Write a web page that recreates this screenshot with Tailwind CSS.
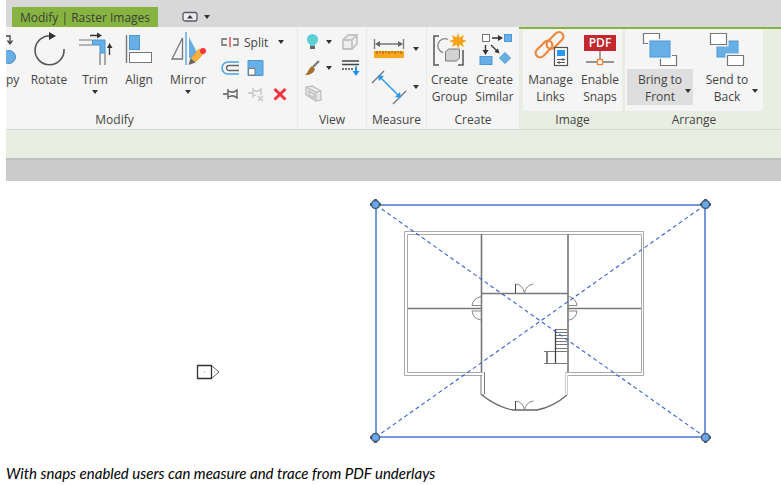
<!DOCTYPE html>
<html lang="en">
<head>
  <meta charset="UTF-8" />
  <meta name="viewport" content="width=device-width, initial-scale=1.0"/>
  <title>Modify | Raster Images</title>
  <script src="https://cdn.jsdelivr.net/npm/@tailwindcss/browser@4"></script>
</head>
<body class="bg-white overflow-hidden font-['Open_Sans',sans-serif] text-[12px] leading-[17px] text-[#444]">
  <header class="ml-1.5">
    <!-- Tabs -->
    <nav class="flex h-[27px] items-end bg-[#d8d8d8] pl-1.5">
      <button class="h-5 w-[146px] whitespace-nowrap bg-[#87b441] text-[#3c3f38]">Modify | Raster Images</button>
      <button class="ml-6 flex h-5 items-center gap-1.5" aria-label="Ribbon display">
        <svg class="h-3 w-4" viewBox="0 0 16 12"><rect x="1" y="1.500" width="14" height="8.500" rx="2" fill="#eee" stroke="#555b66" stroke-width="1.300"/><path d="M5 7.500h6L8 4z" fill="#333"/></svg>
        <svg class="h-1 w-1.5" viewBox="0 0 6 4"><path d="M0 0h6L3 4z" fill="#333"/></svg>
      </button>
    </nav>

    <!-- Ribbon -->
    <div class="flex h-[103px] border-b border-[#d9dbd3] bg-[#f5f5f5]">
      <section class="flex w-[292px] shrink-0 flex-col border-r border-[#e8ebdf]">
        <div class="flex h-[84px] pt-1">
          <button class="flex w-5 flex-col items-start" aria-label="Copy">
            <svg class="h-9 w-5 shrink-0" viewBox="0 0 20 36"><path d="M0 5h4v7M1.500 9.500L4 13l2.500-3.500" fill="none" stroke="#444" stroke-width="1.300"/><circle cx="3" cy="26" r="6.500" fill="#68afe5" stroke="#4a90c8"/></svg>
            <span class="mt-1">py</span>
          </button>
          <button class="flex w-[46px] flex-col items-center">
            <svg class="h-9 w-9 shrink-0" viewBox="0 0 36 36"><path d="M21 5A14.500 14.500 0 1 0 33 18" fill="none" stroke="#555" stroke-width="1.600"/><path d="M18 1l7 4-7 4z" fill="#333"/></svg>
            <span class="mt-1">Rotate</span>
          </button>
          <button class="flex w-[46px] flex-col items-center">
            <svg class="h-9 w-9 shrink-0" viewBox="0 0 36 36"><path d="M2 9h13M2 14h13M23 22v12M28 22v12" stroke="#777" stroke-width="1.200"/><path d="M15.500 9H28v13h-5v-8h-7.500z" fill="#68afe5" stroke="#4494d4"/><path d="M13 4.500h9M32.500 24v-8" stroke="#333" stroke-width="1.300"/><path d="M20 1.500l5 3-5 3zM30 17l2.500-5 3 5z" fill="#333"/></svg>
            <span class="mt-1">Trim</span>
            <svg class="mt-0.5 h-1 w-1.5" viewBox="0 0 6 4"><path d="M0 0h6L3 4z" fill="#333"/></svg>
          </button>
          <button class="flex w-[42px] flex-col items-center">
            <svg class="h-9 w-7 shrink-0" viewBox="0 0 28 36"><path d="M1.500 4v28" stroke="#777" stroke-width="1.400"/><rect x="4.500" y="4.500" width="10" height="14" fill="#68afe5" stroke="#4a98d6"/><rect x="4.500" y="21.500" width="22" height="10" fill="#fff" stroke="#777"/></svg>
            <span class="mt-1">Align</span>
          </button>
          <button class="flex w-[56px] flex-col items-center">
            <svg class="h-9 w-9 shrink-0" viewBox="0 0 36 36"><path d="M12.500 7v21H2z" fill="none" stroke="#777" stroke-width="1.300"/><path d="M16 1v33" stroke="#68afe5" stroke-width="1.600"/><path d="M19 6l11 21H19z" fill="#68afe5"/><path d="M21 27l8-9 5 4-8.500 9z" fill="#fbb03f" stroke="#d98e20" stroke-width=".6"/><path d="M18.500 34l2-7 5 4.500z" fill="#666"/><circle cx="33" cy="20" r="3" fill="#f4333d"/></svg>
            <span class="mt-1">Mirror</span>
            <svg class="mt-0.5 h-1 w-1.5" viewBox="0 0 6 4"><path d="M0 0h6L3 4z" fill="#333"/></svg>
          </button>
          <div class="-mt-0.5 flex flex-col">
            <button class="flex h-[26px] items-center pl-1">
              <svg class="h-4 w-5" viewBox="0 0 20 16"><path d="M7 5H2v6h5M13 5h5v6h-5" fill="none" stroke="#666" stroke-width="1.300"/><path d="M10 3v10" stroke="#e0504c" stroke-width="1.500"/></svg>
              <span class="ml-1">Split</span>
              <svg class="ml-2.5 h-1 w-1.5" viewBox="0 0 6 4"><path d="M0 0h6L3 4z" fill="#333"/></svg>
            </button>
            <div class="flex h-[26px] items-center gap-1.5 pl-1">
              <button aria-label="Offset"><svg class="h-4 w-5" viewBox="0 0 20 16"><path d="M19 2H8a6 6 0 0 0 0 12h11" fill="none" stroke="#4da3e4" stroke-width="1.600"/><path d="M19 5.500H9a2.500 2.500 0 0 0 0 5h10" fill="none" stroke="#666" stroke-width="1.300"/></svg></button>
              <button aria-label="Scale"><svg class="h-4 w-5" viewBox="0 0 20 16"><path d="M2 .5h15v15H2z" fill="#68afe5" stroke="#4a98d6"/><path d="M2.500 8.500h6.500v6.500H2.500z" fill="#fff" stroke="#777"/></svg></button>
            </div>
            <div class="flex h-[26px] items-center gap-1.5 pl-1">
              <button aria-label="Unpin"><svg class="h-4 w-5" viewBox="0 0 20 16"><path d="M3 8h5M8 3v10M8 5l3 1h3l3-2v8l-3-2h-3l-3 1" fill="none" stroke="#555" stroke-width="1.300"/></svg></button>
              <button aria-label="Pin"><svg class="h-4 w-5" viewBox="0 0 20 16"><path d="M2 7h5M7 2v10M7 4l3 1h2l3-2v6M7 10l3-1M12 10l5 5M17 10l-5 5" fill="none" stroke="#c4c4c4" stroke-width="1.300"/></svg></button>
              <button aria-label="Delete"><svg class="h-4 w-4" viewBox="0 0 16 16"><path d="M2.500 3l11 10.500M13.500 3l-11 10.500" stroke="#f3323a" stroke-width="3"/></svg></button>
            </div>
          </div>
        </div>
        <h2 class="pr-[74px] text-center">Modify</h2>
      </section>

      <section class="flex w-[69px] shrink-0 flex-col border-r border-[#e8ebdf]">
        <div class="flex h-[84px] flex-col pt-0.5 pl-1.5">
          <div class="flex h-[26px] items-center">
            <button class="flex items-center" aria-label="Hide in view">
              <svg class="h-5 w-4" viewBox="0 0 16 20"><circle cx="8.500" cy="7.500" r="5.500" fill="#5fcfd6"/><path d="M6 12h5v2H6z" fill="#5fcfd6"/><path d="M6 14h5v3H6z" fill="#666"/></svg>
              <svg class="ml-1.5 h-1 w-1.5" viewBox="0 0 6 4"><path d="M0 0h6L3 4z" fill="#333"/></svg>
            </button>
            <button class="ml-2" aria-label="Selection box"><svg class="h-5 w-5" viewBox="0 0 20 20"><path d="M3 8h9v9H3zM3 8l5-5h9l-5 5M17 3v9l-5 5" fill="#eee" stroke="#c4c4c4" stroke-width="1.800"/></svg></button>
          </div>
          <div class="flex h-[26px] items-center">
            <button class="flex items-center" aria-label="Override graphics">
              <svg class="h-5 w-4" viewBox="0 0 16 20"><path d="M9 9l6-6" stroke="#777" stroke-width="2.200"/><path d="M8 8l3 3c-1 4-5 6-10 6 3-2 3-6 7-9z" fill="#a5702d"/></svg>
              <svg class="ml-1.5 h-1 w-1.5" viewBox="0 0 6 4"><path d="M0 0h6L3 4z" fill="#333"/></svg>
            </button>
            <button class="ml-2" aria-label="Linework"><svg class="h-5 w-5" viewBox="0 0 20 20"><path d="M2 3h17M2 6.500h17" stroke="#444" stroke-width="1.500"/><path d="M2 11h12" stroke="#444" stroke-width="1.300" stroke-dasharray="2 1"/><path d="M16 8.500v6" stroke="#1e90f0" stroke-width="2"/><path d="M12.500 13h7L16 18z" fill="#1e90f0"/></svg></button>
          </div>
          <button class="flex h-[26px] items-center" aria-label="Section box"><svg class="h-5 w-5" viewBox="0 0 20 20"><path d="M2 3l6-1 9 5v9l-5 1-10-6zM2 3l10 5 5-1M12 8v9M5 7l5 3v4l-5-3z" fill="#e6e6e6" stroke="#bbb" stroke-width="1.200"/></svg></button>
        </div>
        <h2 class="text-center">View</h2>
      </section>

      <section class="flex w-[60px] shrink-0 flex-col border-r border-[#e8ebdf]">
        <div class="flex h-[84px] flex-col gap-1 pt-2 pl-1">
          <button class="flex h-7 items-center" aria-label="Measure">
            <svg class="h-6 w-9" viewBox="0 0 36 24"><path d="M3.500 2v10M32.500 2v10M5 7h26" stroke="#777" stroke-width="1.300"/><path d="M4 7l5-3v6zM32 7l-5-3v6z" fill="#666"/><path d="M3 14h30v7H3z" fill="#fba51c"/><path d="M6 14v3M9 14v2M12 14v3M15 14v2M18 14v3M21 14v2M24 14v3M27 14v2M30 14v3" stroke="#8d5c0d"/></svg>
            <svg class="ml-1.5 h-1 w-1.5" viewBox="0 0 6 4"><path d="M0 0h6L3 4z" fill="#333"/></svg>
          </button>
          <button class="flex h-10 items-center" aria-label="Dimension">
            <svg class="h-9 w-9" viewBox="0 0 36 36"><path d="M1 14L13 2M22 35l13-13" stroke="#777" stroke-width="1.400"/><path d="M10 9l18 18" stroke="#2b98f0" stroke-width="1.500"/><path d="M7 6l6 1-5 5zM30 29l-6-1 5-5z" fill="#2b98f0"/></svg>
            <svg class="ml-1.5 h-1 w-1.5" viewBox="0 0 6 4"><path d="M0 0h6L3 4z" fill="#333"/></svg>
          </button>
        </div>
        <h2 class="text-center">Measure</h2>
      </section>

      <section class="flex w-[92px] shrink-0 flex-col">
        <div class="flex h-[84px] pt-1">
          <button class="flex w-[45px] flex-col items-center">
            <svg class="h-9 w-9 shrink-0" viewBox="0 0 36 36"><path d="M7 5H2v29h5M26 34h5V19" fill="none" stroke="#555" stroke-width="1.500"/><path d="M16 8.500a7 7 0 1 0-5 13" fill="none" stroke="#888" stroke-width="1.300"/><path d="M13.500 21l3-3h11v9l-3 3h-11z" fill="#d2d2d2" stroke="#777"/><path d="M26 2l1.500 4.500L32 4l-1.500 4.500 4.500 1.500-4.500 1.500L32 16l-4.500-2.500L26 18l-1.500-4.500L20 16l1.500-4.500L17 10l4.500-1.500L20 4l4.500 2.500z" fill="#f7a21b"/></svg>
            <span class="mt-1">Create<br>Group</span>
          </button>
          <button class="flex w-[45px] flex-col items-center">
            <svg class="h-9 w-9 shrink-0" viewBox="0 0 36 36"><rect x="5.500" y="3.500" width="7" height="7" fill="#fff" stroke="#777"/><rect x="27.500" y="3.500" width="7" height="7" fill="#68afe5" stroke="#4a98d6"/><rect x="3" y="25.500" width="12" height="8" fill="#68afe5" stroke="#4a98d6"/><path d="M28 21.500l5.500 5.500-5.500 5.500-5.500-5.500z" fill="#68afe5" stroke="#4a98d6"/><path d="M15 7h8M8.500 14v6M14 14l6 6" stroke="#333" stroke-width="1.400"/><path d="M21 4l5 3-5 3zM5.500 19h6l-3 5zM22.500 22.500l-5-1.500 3.500-3.500z" fill="#333"/></svg>
            <span class="mt-1">Create<br>Similar</span>
          </button>
        </div>
        <h2 class="text-center">Create</h2>
      </section>

      <!-- Contextual panels -->
      <div class="flex flex-1 border-t-2 border-[#87b441] bg-[#e8eee1] pl-1">
        <section class="flex w-[99px] shrink-0 flex-col">
          <div class="flex h-[82px] bg-[#f5f5f5] pt-0.5">
            <button class="flex w-[55px] flex-col items-center">
              <svg class="h-9 w-9 shrink-0" viewBox="0 0 36 36"><g fill="none" stroke="#f0873c" stroke-width="2.200"><rect x="-10" y="-4.500" width="20" height="9" rx="4.500" transform="translate(11 18) rotate(-45)"/><rect x="-10" y="-4.500" width="20" height="9" rx="4.500" transform="translate(22 9.500) rotate(-45)"/></g><rect x="21.500" y="16.500" width="13" height="18" fill="#fff" stroke="#555" stroke-width="1.200"/><path d="M24 19h8v6h-8z" fill="#2b98f0"/><path d="M24 28.500h8M24 31.500h8M30 27v3M26 30v3" stroke="#555"/></svg>
              <span class="mt-1">Manage<br>Links</span>
            </button>
            <button class="flex w-[44px] flex-col items-center">
              <span class="mt-1 h-4 w-8 bg-[#c4282d] text-[12px] leading-4 font-semibold text-white">PDF</span>
              <svg class="h-4 w-7 shrink-0" viewBox="0 0 28 16"><path d="M14 0v8M0 11h11M17 11h11" stroke="#777" stroke-width="1.300"/><rect x="11.500" y="8.500" width="5" height="5" fill="#fff" stroke="#f0873c" stroke-width="1.400"/></svg>
              <span class="mt-1">Enable<br>Snaps</span>
            </button>
          </div>
          <h2 class="text-center">Image</h2>
        </section>
        <section class="ml-[3px] flex w-[138px] shrink-0 flex-col">
          <div class="flex h-[82px] gap-px bg-[#f5f5f5] px-0.5 pt-0.5">
            <button class="flex w-[66px] flex-col items-center">
              <svg class="h-9 w-9 shrink-0" viewBox="0 0 36 36"><path d="M1.500 2.500h16v10h-16zM18.500 24.500h16v10h-16z" fill="#fff" stroke="#777" stroke-width="1.200"/><rect x="7" y="9" width="22" height="18" fill="#68afe5" stroke="#f5f5f5" stroke-width="2"/><rect x="8" y="10" width="20" height="16" fill="#68afe5" stroke="#4a98d6"/></svg>
              <span class="relative mt-0.5 w-full bg-[#dedede] pt-0.5">
                Bring to<br>Front
                <svg class="absolute right-0.5 bottom-3 h-1 w-1.5" viewBox="0 0 6 4"><path d="M0 0h6L3 4z" fill="#333"/></svg>
              </span>
            </button>
            <button class="flex w-[66px] flex-col items-center">
              <svg class="h-9 w-9 shrink-0" viewBox="0 0 36 36"><rect x="8" y="10" width="21" height="16" fill="#68afe5" stroke="#4a98d6"/><path d="M1.500 2.500h16v11h-16zM18.500 24.500h16v10h-16z" fill="#fff" stroke="#f5f5f5" stroke-width="4"/><path d="M1.500 2.500h16v11h-16zM18.500 24.500h16v10h-16z" fill="#fff" stroke="#777" stroke-width="1.200"/></svg>
              <span class="relative mt-0.5 w-full pt-0.5">
                Send to<br>Back
                <svg class="absolute right-0.5 bottom-3 h-1 w-1.5" viewBox="0 0 6 4"><path d="M0 0h6L3 4z" fill="#333"/></svg>
              </span>
            </button>
          </div>
          <h2 class="text-center">Arrange</h2>
        </section>
      </div>
    </div>

    <!-- Options bar -->
    <div class="h-7 bg-[#e8eee1]"></div>
    <div class="h-[23px] border-t-2 border-[#c0c0c0] bg-[#cbcbcb]"></div>
  </header>

  <main>
    <div class="flex items-start pt-4 pl-[196px]">
      <!-- Elevation marker -->
      <svg class="mt-[167px] h-4 w-6 shrink-0" viewBox="0 0 24 16"><path d="M1.500 1.500h14v13h-14z" fill="none" stroke="#333" stroke-width="1.300"/><path d="M16 2l7 6-7 6" fill="none" stroke="#666"/><path d="M8 8h1M18 8h1" stroke="#999"/></svg>
      <!-- Raster underlay -->
      <svg class="ml-[148px] h-[248px] w-[346px] shrink-0" viewBox="368 197 346 248" fill="none">
        <g stroke="#aaa">
          <path d="M482 375.500h-77.500v-144h239v144H567"/>
          <path d="M483 372.500h-75.500v-138h234v138H566"/>
        </g>
        <path d="M481.500 234v138M568 234v138M482 293.500h86M408 308.500h74M568 308.500h73" stroke="#777" stroke-width="1.600"/>
        <path d="M481 375v20M484.500 372v22M481 395h3" stroke="#777"/>
        <path d="M565.500 372v22M567.500 375v20" stroke="#ccc"/>
        <path d="M482 395Q497 407 513 410h24Q553 407 567 395" stroke="#666" stroke-width="1.300"/>
        <path d="M515.500 293v-9M515.500 410v-9" stroke="#444"/>
        <path d="M516 284q7 1 8.500 9q1.500-8 9-9M516 401q7 1 8.500 9q1.500-8 9-9M481 296.500q-8 2-9 9h9M481 311h-9q1 8 9 9M569 296.500q7 2 8 9h-8M569 311h8q-1 8-8 9" stroke="#888"/>
        <path d="M555 329.500h12M555 332.500h12M555 335.500h12M555 338.500h12M555 341.500h12M555 344.500h12M555 348.500h12M544 351.500h23M544 363.500h23" stroke="#777"/>
        <path d="M555.500 329v34M547 352v11" stroke="#444" stroke-width="1.300"/>
        <path d="M376 205l329 232M705 205L376 437" stroke="#3462d2" stroke-width="1.100" stroke-dasharray="4 3"/>
        <path d="M376 205h329v232H376z" stroke="#4775d4" stroke-width="1.500"/>
        <g fill="#68a8f0" stroke="#4a5a70" stroke-width="1.500">
          <circle cx="375.500" cy="204.500" r="4"/><circle cx="705.500" cy="204.500" r="4"/><circle cx="375.500" cy="437.500" r="4"/><circle cx="705.500" cy="437.500" r="4"/>
        </g>
        <path d="M370 204.500h2M379 204.500h2M375.500 199v2M700 204.500h2M709 204.500h2M705.500 199v2M370 437.500h2M375.500 441v2M709 437.500h2M705.500 441v2" stroke="#4a5a70" stroke-width="3"/>
      </svg>
    </div>
    <p class="mt-4 pl-1.5 font-[Lato,sans-serif] text-[15px] leading-6 text-black italic">With snaps enabled users can measure and trace from PDF underlays</p>
  </main>
</body>
</html>
